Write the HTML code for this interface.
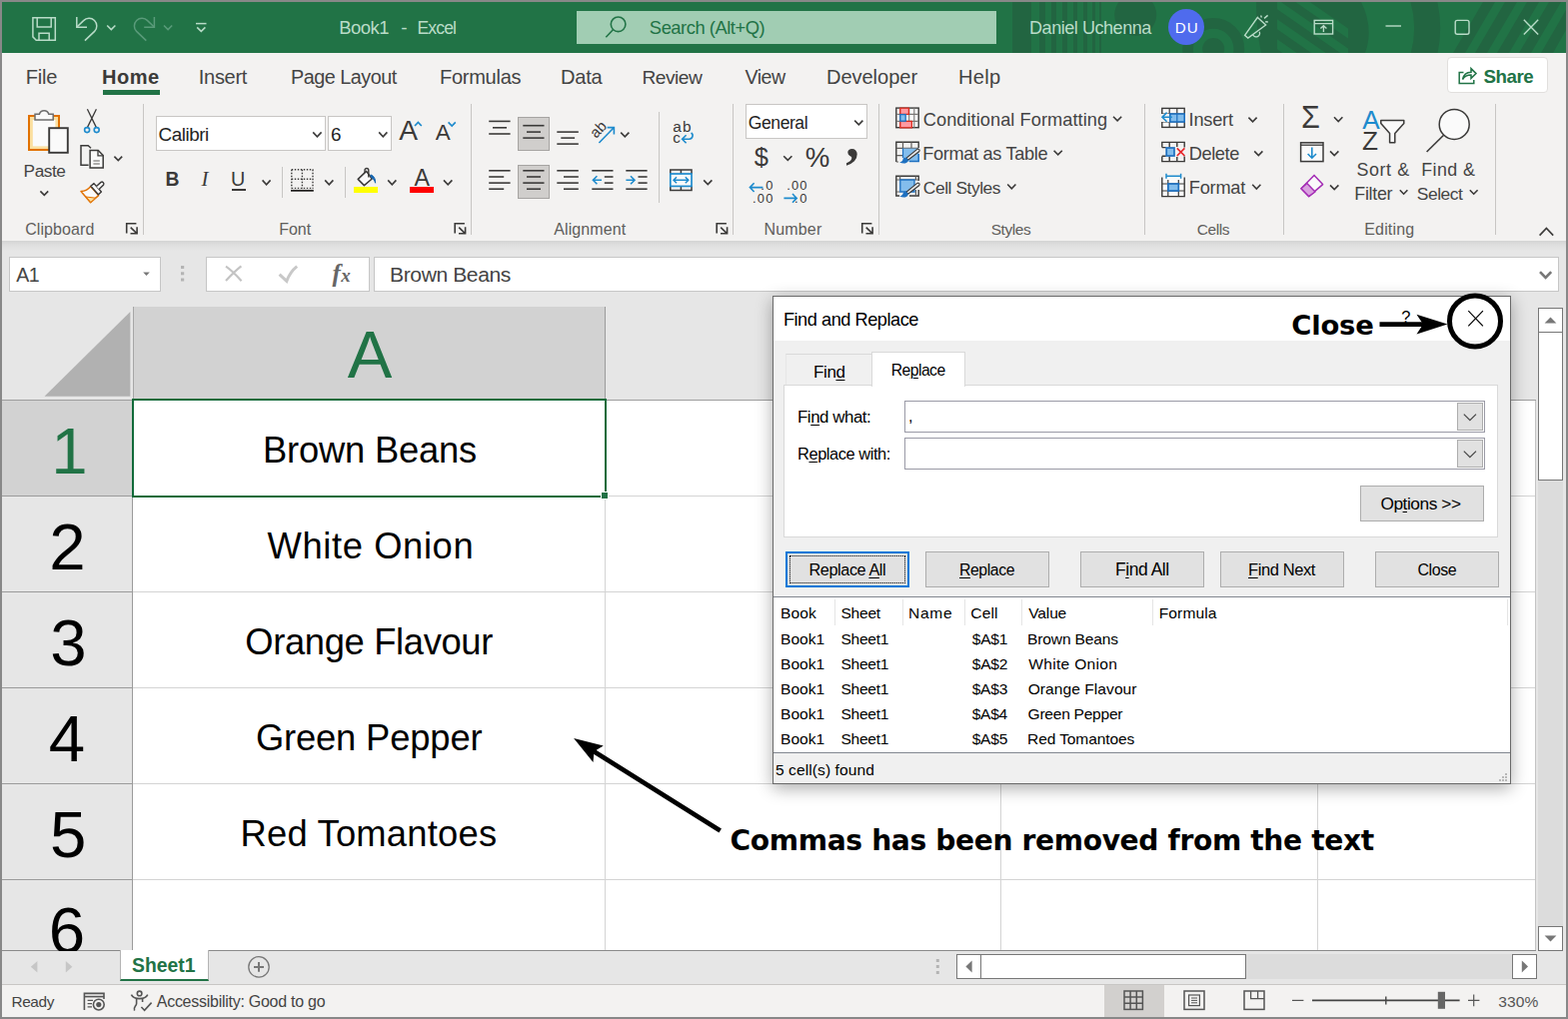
<!DOCTYPE html>
<html><head><meta charset="utf-8"><title>Book1 - Excel</title>
<style>
html,body{margin:0;padding:0}
body{width:1569px;height:1020px;background:#888;position:relative;overflow:hidden;font-family:"Liberation Sans",sans-serif}
.b{position:absolute;box-sizing:border-box}
.t{position:absolute;white-space:pre;line-height:1}
.t u{text-decoration-thickness:1px;text-underline-offset:2px}
svg{overflow:visible}
</style></head><body>
<div id="titlebar" class="b" style="left:2px;top:2px;width:1565px;height:51px;background:#217346;overflow:hidden">
<svg class="b" style="left:0;top:0" width="1565" height="51" viewBox="2 2 1565 51">
<defs><clipPath id="cpd"><path d="M1278 2H1349V53H1278Z"/></clipPath></defs>
<g fill="#226541">
<rect x="1013" y="2" width="19" height="51"/><rect x="1040" y="2" width="6" height="51"/><rect x="1052" y="2" width="5" height="51"/><rect x="1063" y="2" width="5" height="51"/><rect x="1074" y="2" width="4" height="51"/><rect x="1084" y="2" width="4" height="51"/><rect x="1093" y="2" width="3" height="51"/><rect x="1100" y="2" width="2" height="51"/>
<circle cx="1136.2" cy="14.8" r="21"/>
<circle cx="1214.2" cy="49" r="25.6" fill="none" stroke="#226541" stroke-width="10.7"/>
<circle cx="1214.2" cy="49" r="11"/>
<path d="M1257 2Q1257 30 1262 53H1366Q1375 28 1362 2Z"/>
<path d="M1421.2 -10.3A112 112 0 0 1 1421.2 66.3" fill="none" stroke="#226541" stroke-width="26"/>
<path d="M1454 53l30-51h12l-30 51z M1476 53l30-51h12l-30 51z M1498 53l30-51h12l-30 51z M1520 53l30-51h12l-30 51z M1542 53l25-43v20l-13 23z"/>
</g>
<g fill="#217346" clip-path="url(#cpd)"><path d="M1250 -10l110 76v-10l-110-76z M1250 10l110 76v-10l-110-76z M1250 -30l110 76v-10l-110-76z M1250 30l110 76v-10l-110-76z"/></g>
</svg>
</div>
<div class="b" style="left:577px;top:11px;width:420px;height:33px;background:#a1cdb3;"></div>
<span class="t" style="left:339.18px;top:19.00px;font-size:18.46px;letter-spacing:-0.462px;color:#b9dcc8;">Book1</span>
<span class="t" style="left:401.14px;top:18.00px;font-size:19.00px;letter-spacing:0.000px;color:#b9dcc8;">-</span>
<span class="t" style="left:417.45px;top:20.00px;font-size:17.53px;letter-spacing:-0.832px;color:#b9dcc8;">Excel</span>
<span class="t" style="left:649.87px;top:19.00px;font-size:18.34px;letter-spacing:-0.459px;color:#217346;">Search (Alt+Q)</span>
<span class="t" style="left:1030.01px;top:19.00px;font-size:18.02px;letter-spacing:-0.450px;color:#b9dcc8;">Daniel Uchenna</span>
<div class="b" style="left:1169px;top:9px;width:36px;height:36px;background:#4f6bed;border-radius:50%"></div>
<span class="t" style="left:1175.75px;top:20.00px;font-size:15.12px;letter-spacing:1.076px;color:#fff;">DU</span>
<div id="ribbon" class="b" style="left:2px;top:53px;width:1565px;height:188px;background:#f3f2f1"></div>
<span class="t" style="left:25.85px;top:67.00px;font-size:20.06px;letter-spacing:-0.229px;color:#444444;">File</span>
<span class="t" style="left:101.95px;top:67.00px;font-size:20.06px;letter-spacing:0.531px;color:#3b3a39;font-weight:bold;">Home</span>
<span class="t" style="left:198.74px;top:67.00px;font-size:20.06px;letter-spacing:-0.288px;color:#444444;">Insert</span>
<span class="t" style="left:291.07px;top:68.00px;font-size:19.81px;letter-spacing:-0.495px;color:#444444;">Page Layout</span>
<span class="t" style="left:439.95px;top:67.00px;font-size:20.06px;letter-spacing:-0.276px;color:#444444;">Formulas</span>
<span class="t" style="left:561.05px;top:67.00px;font-size:20.06px;letter-spacing:-0.206px;color:#444444;">Data</span>
<span class="t" style="left:642.42px;top:68.00px;font-size:19.19px;letter-spacing:-0.480px;color:#444444;">Review</span>
<span class="t" style="left:745.50px;top:68.00px;font-size:19.59px;letter-spacing:-0.490px;color:#444444;">View</span>
<span class="t" style="left:826.95px;top:67.00px;font-size:20.06px;letter-spacing:-0.032px;color:#444444;">Developer</span>
<span class="t" style="left:958.95px;top:67.00px;font-size:20.06px;letter-spacing:0.346px;color:#444444;">Help</span>
<div class="b" style="left:103px;top:90px;width:57px;height:5px;background:#217346;"></div>
<div class="b" style="left:1448px;top:57px;width:101px;height:36px;background:#fff;border:1px solid #e1dfdd;border-radius:4px"></div>
<span class="t" style="left:1484.49px;top:68.00px;font-size:18.72px;letter-spacing:-0.468px;color:#217346;font-weight:bold;">Share</span>
<div class="b" style="left:143px;top:104px;width:1px;height:131px;background:#c8c6c4;"></div>
<div class="b" style="left:471px;top:104px;width:1px;height:131px;background:#c8c6c4;"></div>
<div class="b" style="left:733px;top:104px;width:1px;height:131px;background:#c8c6c4;"></div>
<div class="b" style="left:879px;top:104px;width:1px;height:131px;background:#c8c6c4;"></div>
<div class="b" style="left:1145px;top:104px;width:1px;height:131px;background:#c8c6c4;"></div>
<div class="b" style="left:1284px;top:104px;width:1px;height:131px;background:#c8c6c4;"></div>
<div class="b" style="left:1496px;top:104px;width:1px;height:131px;background:#c8c6c4;"></div>
<div class="b" style="left:282px;top:167px;width:1px;height:31px;background:#c8c6c4;"></div>
<div class="b" style="left:345px;top:167px;width:1px;height:31px;background:#c8c6c4;"></div>
<div class="b" style="left:659px;top:112px;width:1px;height:91px;background:#c8c6c4;"></div>
<span class="t" style="left:23.58px;top:163.00px;font-size:17.25px;letter-spacing:-0.431px;color:#444;">Paste</span>
<span class="t" style="left:25.20px;top:222.00px;font-size:15.99px;letter-spacing:0.084px;color:#605e5c;">Clipboard</span>
<span class="t" style="left:279.18px;top:222.00px;font-size:15.99px;letter-spacing:-0.013px;color:#605e5c;">Font</span>
<span class="t" style="left:554.26px;top:222.00px;font-size:15.99px;letter-spacing:0.094px;color:#605e5c;">Alignment</span>
<span class="t" style="left:764.48px;top:222.00px;font-size:15.99px;letter-spacing:0.184px;color:#605e5c;">Number</span>
<span class="t" style="left:991.71px;top:222.00px;font-size:15.41px;letter-spacing:-0.385px;color:#605e5c;">Styles</span>
<span class="t" style="left:1197.73px;top:222.00px;font-size:15.46px;letter-spacing:-0.387px;color:#605e5c;">Cells</span>
<span class="t" style="left:1365.28px;top:222.00px;font-size:15.99px;letter-spacing:0.156px;color:#605e5c;">Editing</span>
<div class="b" style="left:156px;top:116px;width:170px;height:35px;background:#fff;border:1px solid #c8c6c4;"></div>
<div class="b" style="left:328px;top:116px;width:64px;height:35px;background:#fff;border:1px solid #c8c6c4;"></div>
<span class="t" style="left:158.56px;top:126.00px;font-size:18.89px;letter-spacing:-0.472px;color:#252423;">Calibri</span>
<span class="t" style="left:331.06px;top:126.00px;font-size:18.90px;letter-spacing:0.000px;color:#252423;">6</span>
<div class="b" style="left:746px;top:104px;width:122px;height:35px;background:#fff;border:1px solid #c8c6c4;"></div>
<span class="t" style="left:748.82px;top:115.00px;font-size:17.54px;letter-spacing:-0.438px;color:#252423;">General</span>
<div class="b" style="left:518px;top:117px;width:32px;height:34px;background:#d0cecc;border:1px solid #a6a4a2;"></div>
<div class="b" style="left:518px;top:165px;width:32px;height:34px;background:#d0cecc;border:1px solid #a6a4a2;"></div>
<span class="t" style="left:165.60px;top:170.00px;font-size:19.33px;letter-spacing:0.000px;color:#3b3a39;font-weight:bold;">B</span>
<span class="t" style="left:201.60px;top:169.00px;font-size:20.76px;letter-spacing:0.000px;color:#3b3a39;font-family:'Liberation Serif',serif;font-style:italic;">I</span>
<span class="t" style="left:231.07px;top:170.00px;font-size:19.77px;letter-spacing:0.000px;color:#3b3a39;">U</span>
<div class="b" style="left:232px;top:189px;width:14px;height:1.5px;background:#3b3a39;"></div>
<span class="t" style="left:399.23px;top:116.00px;font-size:28.20px;letter-spacing:0.000px;color:#3b3a39;">A</span>
<span class="t" style="left:435.74px;top:122.00px;font-size:22.38px;letter-spacing:0.000px;color:#3b3a39;">A</span>
<span class="t" style="left:414.54px;top:167.00px;font-size:23.26px;letter-spacing:0.000px;color:#3b3a39;">A</span>
<div class="b" style="left:354px;top:187.4px;width:24.399999999999977px;height:5.799999999999983px;background:#ffff00;"></div>
<div class="b" style="left:410px;top:187.4px;width:24px;height:5.799999999999983px;background:#ff0000;"></div>
<span class="t" style="left:754.75px;top:145.00px;font-size:25.44px;letter-spacing:0.000px;color:#3b3a39;">$</span>
<span class="t" style="left:805.73px;top:144.00px;font-size:27.62px;letter-spacing:0.000px;color:#3b3a39;">%</span>
<span class="t" style="left:846.23px;top:112.00px;font-size:54.00px;letter-spacing:0.000px;color:#3b3a39;font-family:'Liberation Serif',serif;font-weight:bold;">,</span>
<span class="t" style="left:923.79px;top:111.00px;font-size:18.17px;letter-spacing:0.075px;color:#444;">Conditional Formatting</span>
<span class="t" style="left:923.20px;top:145.00px;font-size:18.17px;letter-spacing:-0.324px;color:#444;">Format as Table</span>
<span class="t" style="left:923.83px;top:180.00px;font-size:17.38px;letter-spacing:-0.435px;color:#444;">Cell Styles</span>
<span class="t" style="left:1189.62px;top:111.00px;font-size:18.17px;letter-spacing:-0.201px;color:#444;">Insert</span>
<span class="t" style="left:1189.80px;top:145.00px;font-size:18.17px;letter-spacing:-0.407px;color:#444;">Delete</span>
<span class="t" style="left:1189.80px;top:179.00px;font-size:18.17px;letter-spacing:-0.203px;color:#444;">Format</span>
<span class="t" style="left:1357.50px;top:162.00px;font-size:17.88px;letter-spacing:0.594px;color:#444;">Sort &amp;</span>
<span class="t" style="left:1355.33px;top:186.00px;font-size:17.88px;letter-spacing:-0.298px;color:#444;">Filter</span>
<span class="t" style="left:1422.23px;top:162.00px;font-size:17.88px;letter-spacing:0.395px;color:#444;">Find &amp;</span>
<span class="t" style="left:1417.72px;top:186.00px;font-size:17.41px;letter-spacing:-0.435px;color:#444;">Select</span>
<span class="t" style="left:1302.00px;top:102.00px;font-size:30.52px;letter-spacing:0.000px;color:#3b3a39;">Σ</span>
<span class="t" style="left:1363.23px;top:107.00px;font-size:26.16px;letter-spacing:0.000px;color:#1e8bcd;">A</span>
<span class="t" style="left:1363.02px;top:128.00px;font-size:26.16px;letter-spacing:0.000px;color:#3b3a39;">Z</span>
<span class="t" style="left:673.14px;top:119.00px;font-size:15.45px;letter-spacing:1.327px;color:#3b3a39;">ab</span>
<span class="t" style="left:673.15px;top:130.00px;font-size:15.20px;letter-spacing:0.000px;color:#3b3a39;">c</span>
<div id="formulabar" class="b" style="left:2px;top:241px;width:1565px;height:67px;background:linear-gradient(#d4d4d4 0,#e0e0e0 5px,#e6e6e6 10px)"></div>
<div class="b" style="left:9px;top:257px;width:152px;height:35px;background:#fff;border:1px solid #c6c6c6;"></div>
<span class="t" style="left:16.35px;top:266.00px;font-size:19.52px;letter-spacing:-0.488px;color:#444;">A1</span>
<div class="b" style="left:206px;top:257px;width:164px;height:35px;background:#fff;border:1px solid #c6c6c6;"></div>
<div class="b" style="left:374px;top:257px;width:1186px;height:35px;background:#fff;border:1px solid #c6c6c6;"></div>
<span class="t" style="left:390.06px;top:264.00px;font-size:21.08px;letter-spacing:-0.407px;color:#444;">Brown Beans</span>
<span class="t" style="left:332.50px;top:261.00px;font-size:25.00px;letter-spacing:0.000px;color:#666;font-family:'Liberation Serif',serif;font-weight:bold;font-style:italic;">f</span>
<span class="t" style="left:341.24px;top:266.00px;font-size:19.00px;letter-spacing:0.000px;color:#666;font-family:'Liberation Serif',serif;font-weight:bold;font-style:italic;">x</span>
<span class="t" style="left:761.24px;top:180.00px;font-size:12.89px;letter-spacing:1.410px;color:#3b3a39;">.0</span>
<span class="t" style="left:752.94px;top:193.00px;font-size:12.89px;letter-spacing:1.261px;color:#3b3a39;">.00</span>
<span class="t" style="left:787.14px;top:180.00px;font-size:12.89px;letter-spacing:1.211px;color:#3b3a39;">.00</span>
<span class="t" style="left:795.04px;top:193.00px;font-size:12.89px;letter-spacing:1.710px;color:#3b3a39;">.0</span>
<div id="grid" class="b" style="left:2px;top:308px;width:1535px;height:643px;background:#fff"></div>
<div class="b" style="left:2px;top:307px;width:1535px;height:93px;background:#e6e6e6;"></div>
<div class="b" style="left:133px;top:307px;width:473px;height:93px;background:#d2d2d2;"></div>
<div class="b" style="left:2px;top:400px;width:131px;height:551px;background:#e6e6e6;"></div>
<div class="b" style="left:2px;top:400px;width:131px;height:96px;background:#d2d2d2;"></div>
<div class="b" style="left:133px;top:496px;width:1404px;height:1px;background:#d4d4d4;"></div>
<div class="b" style="left:2px;top:496px;width:131px;height:1px;background:#9b9b9b;"></div>
<div class="b" style="left:133px;top:592px;width:1404px;height:1px;background:#d4d4d4;"></div>
<div class="b" style="left:2px;top:592px;width:131px;height:1px;background:#9b9b9b;"></div>
<div class="b" style="left:133px;top:688px;width:1404px;height:1px;background:#d4d4d4;"></div>
<div class="b" style="left:2px;top:688px;width:131px;height:1px;background:#9b9b9b;"></div>
<div class="b" style="left:133px;top:784px;width:1404px;height:1px;background:#d4d4d4;"></div>
<div class="b" style="left:2px;top:784px;width:131px;height:1px;background:#9b9b9b;"></div>
<div class="b" style="left:133px;top:880px;width:1404px;height:1px;background:#d4d4d4;"></div>
<div class="b" style="left:2px;top:880px;width:131px;height:1px;background:#9b9b9b;"></div>
<div class="b" style="left:605px;top:400px;width:1px;height:551px;background:#d4d4d4;"></div>
<div class="b" style="left:605px;top:307px;width:1px;height:93px;background:#9b9b9b;"></div>
<div class="b" style="left:1001px;top:400px;width:1px;height:551px;background:#d4d4d4;"></div>
<div class="b" style="left:1001px;top:307px;width:1px;height:93px;background:#9b9b9b;"></div>
<div class="b" style="left:1318px;top:400px;width:1px;height:551px;background:#d4d4d4;"></div>
<div class="b" style="left:1318px;top:307px;width:1px;height:93px;background:#9b9b9b;"></div>
<div class="b" style="left:132px;top:400px;width:1px;height:551px;background:#9b9b9b;"></div>
<div class="b" style="left:1536px;top:400px;width:1px;height:551px;background:#c4c4c4;"></div>
<div class="b" style="left:2px;top:400px;width:1535px;height:1px;background:#9e9e9e;"></div>
<div class="b" style="left:133px;top:307px;width:1px;height:93px;background:#a6a6a6;"></div>
<div class="b" style="left:2px;top:951px;width:1565px;height:1px;background:#8a8a8a;"></div>
<svg class="b" style="left:0;top:0" width="1569" height="1020"><path d="M44.5 396.8H130.4V312Z" fill="#b1b1b1"/></svg>
<span class="t" style="left:347.83px;top:322.00px;font-size:66.86px;letter-spacing:0.000px;color:#217346;">A</span>
<span class="t" style="left:51.29px;top:419.00px;font-size:65.41px;letter-spacing:0.000px;color:#217346;">1</span>
<span class="t" style="left:49.33px;top:515.00px;font-size:65.41px;letter-spacing:0.000px;color:#000;">2</span>
<span class="t" style="left:50.15px;top:611.00px;font-size:65.41px;letter-spacing:0.000px;color:#000;">3</span>
<span class="t" style="left:48.73px;top:707.00px;font-size:65.41px;letter-spacing:0.000px;color:#000;">4</span>
<span class="t" style="left:49.98px;top:803.00px;font-size:65.41px;letter-spacing:0.000px;color:#000;">5</span>
<span class="t" style="left:48.73px;top:899.00px;font-size:65.41px;letter-spacing:0.000px;color:#000;">6</span>
<span class="t" style="left:263.00px;top:433.00px;font-size:36.34px;letter-spacing:-0.185px;color:#000;">Brown Beans</span>
<span class="t" style="left:267.62px;top:529.00px;font-size:36.34px;letter-spacing:0.611px;color:#000;">White Onion</span>
<span class="t" style="left:245.27px;top:625.00px;font-size:36.34px;letter-spacing:-0.337px;color:#000;">Orange Flavour</span>
<span class="t" style="left:255.88px;top:721.00px;font-size:36.34px;letter-spacing:-0.139px;color:#000;">Green Pepper</span>
<span class="t" style="left:240.50px;top:817.00px;font-size:36.34px;letter-spacing:0.230px;color:#000;">Red Tomantoes</span>
<div class="b" style="left:132px;top:399px;width:475px;height:99px;border:2px solid #116b3a;"></div>
<div class="b" style="left:601px;top:492px;width:8px;height:8px;background:#217346;border:1px solid #fff;"></div>
<div class="b" style="left:2px;top:952px;width:1565px;height:33px;background:#e6e6e6;"></div>
<div class="b" style="left:120px;top:951px;width:89px;height:31px;background:#fff;border-bottom:2px solid #217346;border-left:1px solid #b4b4b4;border-right:1px solid #b4b4b4"></div>
<span class="t" style="left:132.07px;top:957.00px;font-size:19.33px;letter-spacing:0.011px;color:#217346;font-weight:bold;">Sheet1</span>
<div class="b" style="left:2px;top:985px;width:1565px;height:33px;background:#f3f2f1;border-top:1px solid #c8c6c4"></div>
<span class="t" style="left:11.43px;top:995.00px;font-size:15.38px;letter-spacing:-0.384px;color:#444;">Ready</span>
<span class="t" style="left:156.76px;top:995.00px;font-size:15.99px;letter-spacing:-0.258px;color:#444;">Accessibility: Good to go</span>
<div class="b" style="left:1105px;top:986px;width:60px;height:32px;background:#d2d0ce;"></div>
<span class="t" style="left:1499.22px;top:995.00px;font-size:15.55px;letter-spacing:0.117px;color:#555;">330%</span>
<div class="b" style="left:957px;top:955px;width:581px;height:25px;background:#dcdcdc;"></div>
<div class="b" style="left:957px;top:955px;width:25px;height:25px;background:#fff;border:1px solid #777;"></div>
<div class="b" style="left:981px;top:955px;width:266px;height:25px;background:#fff;border:1px solid #777;"></div>
<div class="b" style="left:1513px;top:955px;width:25px;height:25px;background:#fff;border:1px solid #777;"></div>
<div class="b" style="left:1537px;top:308px;width:30px;height:644px;background:#e6e6e6;"></div>
<div class="b" style="left:1539px;top:333px;width:25px;height:594px;background:#dcdcdc;"></div>
<div class="b" style="left:1539px;top:308px;width:25px;height:25px;background:#fff;border:1px solid #777;"></div>
<div class="b" style="left:1539px;top:332px;width:25px;height:149px;background:#fff;border:1px solid #777;"></div>
<div class="b" style="left:1539px;top:927px;width:25px;height:25px;background:#fff;border:1px solid #777;"></div>
<div id="dialog" class="b" style="left:773px;top:296px;width:739px;height:489px;background:#f0f0f0;border:1px solid #6a6a6a;box-shadow:0 4px 16px rgba(0,0,0,.33)"></div>
<div class="b" style="left:774px;top:297px;width:737px;height:44px;background:#fff;"></div>
<span class="t" style="left:783.90px;top:311.00px;font-size:18.17px;letter-spacing:-0.454px;color:#000;">Find and Replace</span>
<div class="b" style="left:786px;top:354px;width:87px;height:32px;background:#f0f0f0;border-top:1px solid #d9d9d9;border-left:1px solid #e6e6e6"></div>
<div class="b" style="left:784px;top:385px;width:715px;height:153px;background:#fff;border:1px solid #d9d9d9;"></div>
<div class="b" style="left:872px;top:352px;width:94px;height:35px;background:#fff;border:1px solid #d9d9d9;border-bottom:none"></div>
<span class="t" style="left:814.10px;top:364.00px;font-size:16.99px;letter-spacing:-0.425px;color:#000;">Fin<u>d</u></span>
<span class="t" style="left:891.70px;top:363.00px;font-size:15.70px;letter-spacing:-0.518px;color:#000;">Re<u>p</u>lace</span>
<span class="t" style="left:798.01px;top:410.00px;font-size:16.82px;letter-spacing:-0.421px;color:#000;">Fi<u>n</u>d what:</span>
<span class="t" style="left:798.05px;top:446.00px;font-size:16.38px;letter-spacing:-0.410px;color:#000;">R<u>e</u>place with:</span>
<div class="b" style="left:905px;top:401px;width:581px;height:32px;background:#fff;border:1px solid #9a9aa6;"></div>
<div class="b" style="left:905px;top:438px;width:581px;height:32px;background:#fff;border:1px solid #9a9aa6;"></div>
<div class="b" style="left:1458px;top:403px;width:26px;height:28px;background:#e1e1e1;border:1px solid #adadad;"></div>
<div class="b" style="left:1458px;top:440px;width:26px;height:28px;background:#e1e1e1;border:1px solid #adadad;"></div>
<span class="t" style="left:909.06px;top:409.00px;font-size:16.00px;letter-spacing:0.000px;color:#000;">,</span>
<div class="b" style="left:1361px;top:486px;width:124px;height:36px;background:#e1e1e1;border:1px solid #adadad;"></div>
<span class="t" style="left:1381.38px;top:496.00px;font-size:17.29px;letter-spacing:-0.432px;color:#000;">Op<u>t</u>ions &gt;&gt;</span>
<div class="b" style="left:786px;top:552px;width:124px;height:36px;background:#e1e1e1;border:2px solid #0078d7;"></div>
<div class="b" style="left:790px;top:556px;width:116px;height:28px;border:1px dotted #000;"></div>
<span class="t" style="left:809.56px;top:562.00px;font-size:16.23px;letter-spacing:-0.406px;color:#000;">Replace <u>A</u>ll</span>
<div class="b" style="left:926px;top:552px;width:124px;height:36px;background:#e1e1e1;border:1px solid #adadad;"></div>
<span class="t" style="left:960.00px;top:563.00px;font-size:15.77px;letter-spacing:-0.394px;color:#000;"><u>R</u>eplace</span>
<div class="b" style="left:1081px;top:552px;width:124px;height:36px;background:#e1e1e1;border:1px solid #adadad;"></div>
<span class="t" style="left:1115.96px;top:562.00px;font-size:17.44px;letter-spacing:-0.428px;color:#000;">F<u>i</u>nd All</span>
<div class="b" style="left:1221px;top:552px;width:124px;height:36px;background:#e1e1e1;border:1px solid #adadad;"></div>
<span class="t" style="left:1249.04px;top:562.00px;font-size:16.49px;letter-spacing:-0.412px;color:#000;"><u>F</u>ind Next</span>
<div class="b" style="left:1376px;top:552px;width:124px;height:36px;background:#e1e1e1;border:1px solid #adadad;"></div>
<span class="t" style="left:1418.40px;top:563.00px;font-size:15.96px;letter-spacing:-0.399px;color:#000;">Close</span>
<div class="b" style="left:774px;top:597px;width:737px;height:157px;background:#fff;border-top:1px solid #828790;border-bottom:1px solid #828790"></div>
<div class="b" style="left:835px;top:600px;width:1px;height:26px;background:#e5e5e5;"></div>
<div class="b" style="left:903px;top:600px;width:1px;height:26px;background:#e5e5e5;"></div>
<div class="b" style="left:965px;top:600px;width:1px;height:26px;background:#e5e5e5;"></div>
<div class="b" style="left:1022px;top:600px;width:1px;height:26px;background:#e5e5e5;"></div>
<div class="b" style="left:1153px;top:600px;width:1px;height:26px;background:#e5e5e5;"></div>
<div class="b" style="left:1508px;top:600px;width:1px;height:26px;background:#e5e5e5;"></div>
<span class="t" style="left:781.02px;top:606.00px;font-size:15.55px;letter-spacing:0.108px;color:#000;">Book</span>
<span class="t" style="left:841.50px;top:606.00px;font-size:15.55px;letter-spacing:-0.253px;color:#000;">Sheet</span>
<span class="t" style="left:909.02px;top:606.00px;font-size:15.55px;letter-spacing:0.686px;color:#000;">Name</span>
<span class="t" style="left:971.22px;top:606.00px;font-size:15.55px;letter-spacing:0.180px;color:#000;">Cell</span>
<span class="t" style="left:1029.32px;top:606.00px;font-size:15.55px;letter-spacing:-0.167px;color:#000;">Value</span>
<span class="t" style="left:1159.72px;top:606.00px;font-size:15.55px;letter-spacing:0.118px;color:#000;">Formula</span>
<span class="t" style="left:781.02px;top:632.00px;font-size:15.55px;letter-spacing:0.008px;color:#000;">Book1</span>
<span class="t" style="left:841.50px;top:632.00px;font-size:15.55px;letter-spacing:-0.265px;color:#000;">Sheet1</span>
<span class="t" style="left:972.64px;top:632.00px;font-size:15.55px;letter-spacing:-0.140px;color:#000;">$A$1</span>
<span class="t" style="left:1028.12px;top:632.00px;font-size:15.55px;letter-spacing:-0.147px;color:#000;">Brown Beans</span>
<span class="t" style="left:781.02px;top:657.00px;font-size:15.55px;letter-spacing:0.008px;color:#000;">Book1</span>
<span class="t" style="left:841.50px;top:657.00px;font-size:15.55px;letter-spacing:-0.265px;color:#000;">Sheet1</span>
<span class="t" style="left:972.64px;top:657.00px;font-size:15.55px;letter-spacing:-0.140px;color:#000;">$A$2</span>
<span class="t" style="left:1029.32px;top:657.00px;font-size:15.55px;letter-spacing:0.297px;color:#000;">White Onion</span>
<span class="t" style="left:781.02px;top:682.00px;font-size:15.55px;letter-spacing:0.008px;color:#000;">Book1</span>
<span class="t" style="left:841.50px;top:682.00px;font-size:15.55px;letter-spacing:-0.265px;color:#000;">Sheet1</span>
<span class="t" style="left:972.64px;top:682.00px;font-size:15.55px;letter-spacing:-0.166px;color:#000;">$A$3</span>
<span class="t" style="left:1028.66px;top:682.00px;font-size:15.55px;letter-spacing:0.063px;color:#000;">Orange Flavour</span>
<span class="t" style="left:781.02px;top:707.00px;font-size:15.55px;letter-spacing:0.008px;color:#000;">Book1</span>
<span class="t" style="left:841.50px;top:707.00px;font-size:15.55px;letter-spacing:-0.265px;color:#000;">Sheet1</span>
<span class="t" style="left:972.64px;top:707.00px;font-size:15.55px;letter-spacing:-0.244px;color:#000;">$A$4</span>
<span class="t" style="left:1028.62px;top:707.00px;font-size:15.55px;letter-spacing:-0.254px;color:#000;">Green Pepper</span>
<span class="t" style="left:781.02px;top:732.00px;font-size:15.55px;letter-spacing:0.008px;color:#000;">Book1</span>
<span class="t" style="left:841.50px;top:732.00px;font-size:15.55px;letter-spacing:-0.265px;color:#000;">Sheet1</span>
<span class="t" style="left:972.64px;top:732.00px;font-size:15.55px;letter-spacing:-0.179px;color:#000;">$A$5</span>
<span class="t" style="left:1028.12px;top:732.00px;font-size:15.55px;letter-spacing:-0.125px;color:#000;">Red Tomantoes</span>
<span class="t" style="left:775.88px;top:763.00px;font-size:15.55px;letter-spacing:0.095px;color:#000;">5 cell(s) found</span>
<span class="t" style="left:1402.14px;top:309.00px;font-size:16.50px;letter-spacing:0.000px;color:#000;">?</span>
<span class="t" style="left:1292.33px;top:312.00px;font-size:27.43px;letter-spacing:-0.215px;color:#000;font-family:'DejaVu Sans','Liberation Sans',sans-serif;font-weight:bold;">Close</span>
<span class="t" style="left:730.59px;top:828.00px;font-size:28.12px;letter-spacing:-0.351px;color:#000;font-family:'DejaVu Sans','Liberation Sans',sans-serif;font-weight:bold;">Commas has been removed from the text</span>
<svg class="b" style="left:0;top:0" width="1569" height="1020">
<circle cx="1476" cy="321.4" r="25.5" fill="none" stroke="#000" stroke-width="5"/>
<path d="M1469.3 311.2l14.6 15.2M1483.9 311.2l-14.6 15.2" stroke="#000" stroke-width="1.2" fill="none"/>
<path d="M1380.5 324.6H1428" stroke="#000" stroke-width="4.6"/>
<path d="M1448.5 324.5L1417.5 314.8L1424 324.5L1417.5 334.4Z" fill="#000"/>
<path d="M720.7 831.5L594 752" stroke="#000" stroke-width="4.7"/>
<path d="M574.1 739.1L603.8 746.4L597.2 750.4L594.2 755L593.5 762.9Z" fill="#000"/>
</svg>
<svg class="b" style="left:0;top:0" width="1569" height="1020"><g fill="none" stroke="#b9dcc8" stroke-width="1.5">
<path d="M32.9 17.7H55.3V40.2H36.2L32.9 36.9Z"/><path d="M37.2 17.7V27H51.2V17.7"/><path d="M39 40.2V33.2H49.2V40.2"/>
<path d="M76.8 17V27.2H87"/><path d="M77.2 26.8L83.6 20.6A7.7 7.7 0 0 1 94.6 31.4L84.9 40.6"/>
<path d="M107.2 25.4L111.30000000000001 29.6L115.4 25.4" fill="none" stroke="#b9dcc8" stroke-width="1.5"/>
<path d="M196 23.6H206.5"/><path d="M197.2 27.4L201.3 31.4L205.4 27.4" fill="none" stroke="#b9dcc8" stroke-width="1.5"/>
</g>
<g fill="none" stroke="#5a9b7a" stroke-width="1.5">
<path d="M154.4 17V27.2H144.2"/><path d="M154 26.8L147.6 20.6A7.7 7.7 0 0 0 136.6 31.4L146.3 40.6"/>
<path d="M164 25.4L168.1 29.6L172.2 25.4" fill="none" stroke="#5a9b7a" stroke-width="1.5"/>
</g>
<g fill="none" stroke="#217346" stroke-width="1.6"><circle cx="618.6" cy="24.3" r="7.3"/><path d="M613.4 29.7L606.3 37.2"/></g>
<g fill="none" stroke="#b9dcc8" stroke-width="1.4">
<path d="M1258.4 17.4L1266.6 25L1248.8 38L1245.6 35.4Z"/><path d="M1253.6 34.8A3.6 3.6 0 0 0 1260.2 31.8"/><path d="M1261.6 15.4L1262.4 17.6M1265 18.4L1268.6 15.4M1266.2 21.8L1268.8 22"/>
<rect x="1315.2" y="20.4" width="18.4" height="13.6"/><path d="M1315.2 23.6H1333.6M1324.4 32V26M1321.4 28.6L1324.4 25.8L1327.4 28.6"/>
<path d="M1386.5 26H1402"/>
<rect x="1456.2" y="20.4" width="13.8" height="13.8" rx="2"/>
<path d="M1524.8 19.8L1539.2 34.4M1539.2 19.8L1524.8 34.4"/>
</g>
<g fill="none" stroke="#217346" stroke-width="1.5"><path d="M1464.5 72.5H1460.2V83.4H1474.8V80"/><path d="M1463.5 79.5C1464.5 74.5 1468 72.2 1472 72.2V68.6L1477 73.6L1472 78.4V75C1468.5 75 1465.5 76.2 1463.5 79.5Z"/></g>
<rect x="29" y="116" width="30" height="34" fill="#fbdf9f" stroke="#e17100" stroke-width="2"/>
<rect x="32.8" y="120" width="22.6" height="26.4" fill="#fafafa"/>
<path d="M35 120V114.2H39.4A4.9 4.9 0 0 1 48.8 114.2H53.2V120Z" fill="#fafafa" stroke="#6d6d6d" stroke-width="1.5"/>
<rect x="49.2" y="128.2" width="18.6" height="24.6" fill="#fafafa" stroke="#3b3a39" stroke-width="1.9"/>
<path d="M40.4 191.4L44.3 195.4L48.2 191.4" fill="none" stroke="#3b3a39" stroke-width="1.6"/>
<path d="M87.4 109.2L96.4 127.6M96.4 109.2L87.4 127.6" stroke="#3b3a39" stroke-width="1.3" fill="none"/>
<circle cx="87.1" cy="130.1" r="2.5" fill="none" stroke="#1e8bcd" stroke-width="1.6"/><circle cx="96.7" cy="130.1" r="2.5" fill="none" stroke="#1e8bcd" stroke-width="1.6"/>
<path d="M88.6 165.2H81V145.8H88.2L91 148.2" fill="none" stroke="#3b3a39" stroke-width="1.5"/>
<path d="M90.1 150.4H98.2L103.2 155.6V168H90.1Z" fill="#fafafa" stroke="#3b3a39" stroke-width="1.5"/><path d="M98 150.6V155.8H103" fill="none" stroke="#3b3a39" stroke-width="1.3"/>
<path d="M93.4 161H99.8M93.4 164H99.8" stroke="#605e5c" stroke-width="1.2"/>
<path d="M114.4 156.6L118.30000000000001 160.6L122.2 156.6" fill="none" stroke="#3b3a39" stroke-width="1.6"/>
<path d="M81 191.6C85 191.2 88.4 189.6 90.6 186.6L98.6 195.6L90.6 202.8Z" fill="#fafafa" stroke="#e17100" stroke-width="1.5" stroke-linejoin="round"/>
<path d="M86 197L95.6 198.2L90.8 202.4Z" fill="#fbdf9f" stroke="#e17100" stroke-width="1"/>
<path d="M90.8 186.2L94 183.6L101.4 192L98.4 194.8Z" fill="#fafafa" stroke="#3b3a39" stroke-width="1.4" stroke-linejoin="round"/>
<path d="M96.4 186.6L101 182.4A1.9 1.9 0 0 1 103.6 185L99 189.6" fill="#fafafa" stroke="#3b3a39" stroke-width="1.4"/>
<path d="M126.7 233.6V223.8H136.4M130.7 227.7L137.1 233.8M137.1 227.2V233.8H130.5" fill="none" stroke="#3b3a39" stroke-width="1.6"/>

<path d="M313.2 132.4L317.4 136.8L321.6 132.4" fill="none" stroke="#3b3a39" stroke-width="1.6"/><path d="M379.2 132.4L383.29999999999995 136.8L387.4 132.4" fill="none" stroke="#3b3a39" stroke-width="1.6"/>
<path d="M415 126L418.4 122.4L421.8 126" fill="none" stroke="#1e8bcd" stroke-width="1.7"/><path d="M448.6 122.4L452.2 126L455.8 122.4" fill="none" stroke="#1e8bcd" stroke-width="1.7"/>
<path d="M262.6 180.4L266.6 184.8L270.6 180.4" fill="none" stroke="#3b3a39" stroke-width="1.6"/><path d="M325.2 180.4L329.29999999999995 184.8L333.4 180.4" fill="none" stroke="#3b3a39" stroke-width="1.6"/><path d="M388.2 180.4L392.29999999999995 184.8L396.4 180.4" fill="none" stroke="#3b3a39" stroke-width="1.6"/><path d="M444 180.4L448.2 184.8L452.4 180.4" fill="none" stroke="#3b3a39" stroke-width="1.6"/>
<g fill="none" stroke="#3b3a39" stroke-width="1.4" stroke-dasharray="1.4 1.6"><path d="M291.8 169.8H313.4M291.8 179.2H313.4M291.8 188.4H313.4M291.8 169.8V188.6M302.4 169.8V188.6M313 169.8V188.6"/></g><path d="M291 190.8H313.8" stroke="#201f1e" stroke-width="1.8"/>
<path d="M366.6 171.4L372.2 179L364.4 185.6L358.2 179.4Z" fill="#fafafa" stroke="#3b3a39" stroke-width="1.5" stroke-linejoin="round"/><path d="M365 173V170.4A1.8 1.8 0 0 1 368.8 170.4V177.6" fill="none" stroke="#3b3a39" stroke-width="1.4"/><path d="M370.8 175C373.6 175.4 375.8 178.6 375.6 183.2C374.8 180.6 373.6 178.8 371.4 177.6Z" fill="#1565b0" stroke="#1565b0" stroke-width="1"/>
<path d="M489.2 121.4H510.6" stroke="#3b3a39" stroke-width="1.6" fill="none"/><path d="M493 127.8H507" stroke="#3b3a39" stroke-width="1.6" fill="none"/><path d="M489.2 134H510.6" stroke="#3b3a39" stroke-width="1.6" fill="none"/>
<path d="M523.3 125.7H544.5" stroke="#3b3a39" stroke-width="1.6" fill="none"/><path d="M527 132.1H541" stroke="#3b3a39" stroke-width="1.6" fill="none"/><path d="M523.3 138.1H544.5" stroke="#3b3a39" stroke-width="1.6" fill="none"/>
<path d="M557.3 132.1H578.8" stroke="#3b3a39" stroke-width="1.6" fill="none"/><path d="M561.3 138.1H575.1" stroke="#3b3a39" stroke-width="1.6" fill="none"/><path d="M557.3 144.1H578.8" stroke="#3b3a39" stroke-width="1.6" fill="none"/>
<path d="M489.2 170.8H510.6" stroke="#3b3a39" stroke-width="1.6" fill="none"/><path d="M489.2 177H504.2" stroke="#3b3a39" stroke-width="1.6" fill="none"/><path d="M489.2 183.1H510.6" stroke="#3b3a39" stroke-width="1.6" fill="none"/><path d="M489.2 189.2H504.2" stroke="#3b3a39" stroke-width="1.6" fill="none"/>
<path d="M523.3 170.8H544.5" stroke="#3b3a39" stroke-width="1.6" fill="none"/><path d="M527 177H541" stroke="#3b3a39" stroke-width="1.6" fill="none"/><path d="M523.3 183.1H544.5" stroke="#3b3a39" stroke-width="1.6" fill="none"/><path d="M527 189.2H541" stroke="#3b3a39" stroke-width="1.6" fill="none"/>
<path d="M557.3 170.8H578.8" stroke="#3b3a39" stroke-width="1.6" fill="none"/><path d="M564 177H578.8" stroke="#3b3a39" stroke-width="1.6" fill="none"/><path d="M557.3 183.1H578.8" stroke="#3b3a39" stroke-width="1.6" fill="none"/><path d="M564 189.2H578.8" stroke="#3b3a39" stroke-width="1.6" fill="none"/>
<path d="M592.3 170.8H613.5" stroke="#3b3a39" stroke-width="1.6" fill="none"/><path d="M604.8 177H613.5" stroke="#3b3a39" stroke-width="1.6" fill="none"/><path d="M604.8 183.1H613.5" stroke="#3b3a39" stroke-width="1.6" fill="none"/><path d="M592.3 189.2H613.5" stroke="#3b3a39" stroke-width="1.6" fill="none"/>
<path d="M626.3 170.8H647.6" stroke="#3b3a39" stroke-width="1.6" fill="none"/><path d="M638.5 177H647.6" stroke="#3b3a39" stroke-width="1.6" fill="none"/><path d="M638.5 183.1H647.6" stroke="#3b3a39" stroke-width="1.6" fill="none"/><path d="M626.3 189.2H647.6" stroke="#3b3a39" stroke-width="1.6" fill="none"/>
<g fill="none" stroke="#1e8bcd" stroke-width="1.6"><path d="M593.4 180.2H602M597.4 176.2L593.4 180.2L597.4 184.2"/><path d="M626.4 180.2H635M631 176.2L635 180.2L631 184.2"/><path d="M599.4 143L614.2 127.8M607.6 127.6H614.4V134.6"/><path d="M683 139.2H689.6A3.4 3.4 0 0 0 691.6 133M686.6 135.2L682.6 139.2L686.6 143.2"/></g>
<text transform="translate(596.5 139) rotate(-47)" font-family="Liberation Sans,sans-serif" font-size="15" fill="#3b3a39">ab</text>
<path d="M621.2 132.6L625.3 136.8L629.4 132.6" fill="none" stroke="#3b3a39" stroke-width="1.6"/><path d="M704.2 180.4L708.3 184.6L712.4 180.4" fill="none" stroke="#3b3a39" stroke-width="1.6"/>
<g fill="none" stroke="#3b3a39" stroke-width="1.5"><path d="M670.8 174V170H692V174M670.8 186.4V190.6H692V186.4M681.4 170V174M681.4 186.4V190.6"/></g><rect x="670.8" y="174" width="21.2" height="12.4" fill="#fafafa" stroke="#1e8bcd" stroke-width="1.7"/><path d="M674 180.2H688.8M677 177.2L674 180.2L677 183.2M685.8 177.2L688.8 180.2L685.8 183.2" fill="none" stroke="#1e8bcd" stroke-width="1.5"/>
<path d="M455.2 233.6V223.8H464.9M459.2 227.7L465.6 233.8M465.6 227.2V233.8H459.0" fill="none" stroke="#3b3a39" stroke-width="1.6"/><path d="M717.2 233.6V223.8H726.9M721.2 227.7L727.6 233.8M727.6 227.2V233.8H721.0" fill="none" stroke="#3b3a39" stroke-width="1.6"/><path d="M862.7 233.6V223.8H872.4M866.7 227.7L873.1 233.8M873.1 227.2V233.8H866.5" fill="none" stroke="#3b3a39" stroke-width="1.6"/>
<path d="M855.2 120.6L859.3 124.8L863.4 120.6" fill="none" stroke="#3b3a39" stroke-width="1.6"/><path d="M784.2 156.2L788.3 160.4L792.4 156.2" fill="none" stroke="#3b3a39" stroke-width="1.6"/>
<g fill="none" stroke="#1e8bcd" stroke-width="1.6"><path d="M750.4 187.6H763.4M754.6 183.2L750.4 187.6L754.6 192"/><path d="M784.4 198.4H797.2M793 194L797.2 198.4L793 202.8"/></g>
<g><rect x="896.8" y="108.1" width="22.4" height="19.6" fill="#fafafa" stroke="#3b3a39" stroke-width="1.4"/><path d="M900.6 108V128M909.7 108V128M914.8 108V128M896.8 114.4H919.2M896.8 121.4H919.2" stroke="#797775" stroke-width="1.1" fill="none"/><rect x="900.8" y="108.2" width="8.6" height="6.2" fill="#ff9aa2" stroke="#d92c20" stroke-width="1.3"/><rect x="900.8" y="121.4" width="11.6" height="6.4" fill="#ff9aa2" stroke="#d92c20" stroke-width="1.3"/><rect x="900.8" y="114.6" width="5.4" height="6.6" fill="#83bdec" stroke="#1e70c0" stroke-width="1.3"/></g>
<g><path d="M919.2 148V142.2H896.8V162" fill="none" stroke="#3b3a39" stroke-width="1.4"/><path d="M903.5 142.2V148.4M912 142.2V148.4M896.8 148.4H919M896.8 155.6H903.5M896.8 162H899" stroke="#605e5c" stroke-width="1.2" fill="none"/><path d="M903.6 148.6H919.2V161.8H903.6Z" fill="#83bdec"/><path d="M910 161.6H919.2V154" fill="none" stroke="#1e70c0" stroke-width="1.5"/><path d="M903.5 148.4V158" stroke="#1e70c0" stroke-width="1.2"/><g transform="translate(0 0)"><path d="M919.6 149.4C920.4 150 920.2 151 919.6 151.8L908.6 160.2L906.8 158.4L917.4 149.6C918.2 149 919 149 919.6 149.4Z" fill="#e6e6e6" stroke="#3b3a39" stroke-width="1.1"/><path d="M906.4 158C908.4 158.6 909.2 160.2 908.4 161.8C907 164 903.4 164 900 162.4C902.6 162 903.2 160.6 903.6 159.4C904.2 158 905.2 157.6 906.4 158Z" fill="#1e70c0"/></g></g>
<g><path d="M919.2 181V176.2H896.8V196H900M910 196H919.2V190" fill="none" stroke="#3b3a39" stroke-width="1.4"/><path d="M900.6 176.2V180M916.4 176.2V180M896.8 180H919M896.8 192H900.6M916.4 190V196" stroke="#605e5c" stroke-width="1.2" fill="none"/><path d="M900.8 180H915V192H900.8Z" fill="#83bdec" stroke="#1e70c0" stroke-width="1.3"/><g transform="translate(0 34)"><path d="M919.6 149.4C920.4 150 920.2 151 919.6 151.8L908.6 160.2L906.8 158.4L917.4 149.6C918.2 149 919 149 919.6 149.4Z" fill="#e6e6e6" stroke="#3b3a39" stroke-width="1.1"/><path d="M906.4 158C908.4 158.6 909.2 160.2 908.4 161.8C907 164 903.4 164 900 162.4C902.6 162 903.2 160.6 903.6 159.4C904.2 158 905.2 157.6 906.4 158Z" fill="#1e70c0"/></g></g>
<path d="M1114 116.7L1118.1 120.9L1122.2 116.7" fill="none" stroke="#3b3a39" stroke-width="1.6"/><path d="M1054.6 150.7L1058.6999999999998 154.9L1062.8 150.7" fill="none" stroke="#3b3a39" stroke-width="1.6"/><path d="M1008.2 184.5L1012.3 188.8L1016.4 184.5" fill="none" stroke="#3b3a39" stroke-width="1.6"/>
<g><rect x="1162.8" y="108.4" width="22.4" height="19" fill="#fafafa" stroke="#3b3a39" stroke-width="1.4"/><path d="M1170.2 108.4V127.4M1177.8 108.4V127.4M1162.8 114H1185M1162.8 122H1185" stroke="#3b3a39" stroke-width="1.2" fill="none"/><rect x="1170.8" y="114" width="14.4" height="8" fill="#83bdec" stroke="#1e70c0" stroke-width="1.6"/><path d="M1177.8 114V122" stroke="#1e70c0" stroke-width="1.2"/><path d="M1162 114H1170V122H1162Z" fill="#f3f2f1"/><path d="M1163 117.2H1172.8M1167.6 112.6L1163 117.2L1167.6 121.8" fill="none" stroke="#1e8bcd" stroke-width="1.6"/></g>
<g fill="none" stroke="#3b3a39" stroke-width="1.4"><path d="M1162.8 147.6V142.4H1185.2V147.6M1162.8 156.4V161.6H1185.2V156.4M1170.2 142.4V147.6M1177.8 142.4V147M1170.2 156.4V161.6M1177.8 157V161.6M1162.8 147.6H1166.8M1162.8 156.2H1166.8"/></g><rect x="1167.2" y="148" width="7.8" height="8" fill="#83bdec" stroke="#1e70c0" stroke-width="1.7"/><path d="M1177.8 148.4L1185.4 156M1185.4 148.4L1177.8 156" stroke="#e8262a" stroke-width="1.7" fill="none"/>
<g><path d="M1162.8 177.4V196.6H1185.2V177.4" fill="#fafafa" stroke="#3b3a39" stroke-width="1.4"/><path d="M1168.8 180V196.6M1179.3 180V196.6M1162.8 184H1185M1162.8 191H1185" stroke="#3b3a39" stroke-width="1.2" fill="none"/><rect x="1168.9" y="184" width="10.4" height="7" fill="#83bdec" stroke="#1e70c0" stroke-width="1.7"/><path d="M1167 176.2H1181.6M1167 173.8V178.8M1181.6 173.8V178.8" stroke="#1e8bcd" stroke-width="1.5" fill="none"/></g>
<path d="M1249.4 117.6L1253.5 121.8L1257.6 117.6" fill="none" stroke="#3b3a39" stroke-width="1.6"/><path d="M1255.2 151.4L1259.3000000000002 155.6L1263.4 151.4" fill="none" stroke="#3b3a39" stroke-width="1.6"/><path d="M1253.2 184.8L1257.3000000000002 189L1261.4 184.8" fill="none" stroke="#3b3a39" stroke-width="1.6"/>
<path d="M1335 117.2L1339.2 121.6L1343.4 117.2" fill="none" stroke="#3b3a39" stroke-width="1.6"/><path d="M1331 151.4L1335.2 155.6L1339.4 151.4" fill="none" stroke="#3b3a39" stroke-width="1.6"/><path d="M1331 185.4L1335.2 189.6L1339.4 185.4" fill="none" stroke="#3b3a39" stroke-width="1.6"/><path d="M1400.8 190.2L1404.6 194.2L1408.4 190.2" fill="none" stroke="#3b3a39" stroke-width="1.6"/><path d="M1470.8 190.2L1474.6999999999998 194.2L1478.6 190.2" fill="none" stroke="#3b3a39" stroke-width="1.6"/>
<rect x="1301.6" y="142.8" width="22.4" height="18.8" fill="#fafafa" stroke="#3b3a39" stroke-width="1.5"/><path d="M1301.6 145.2H1324" stroke="#3b3a39" stroke-width="1.3"/><path d="M1312.8 147.6V158M1308.6 154L1312.8 158.2L1317 154" fill="none" stroke="#1e8bcd" stroke-width="1.6"/>
<path d="M1315 175.4L1323.6 184.6L1309.6 196.6L1302 188.8Z" fill="#fafafa" stroke="#a32cb4" stroke-width="1.5" stroke-linejoin="round"/><path d="M1307.8 183.6L1316 192L1309.6 196.6L1302 188.8Z" fill="#d9a0df" stroke="#a32cb4" stroke-width="1.4" stroke-linejoin="round"/>
<path d="M1381.8 120.4H1404.8V123.6L1395.8 133.6V142.8H1390.6V133.6L1381.8 123.6Z" fill="#fafafa" stroke="#3b3a39" stroke-width="1.5" stroke-linejoin="round"/>
<circle cx="1455.2" cy="124.4" r="15" fill="#fafafa" stroke="#3b3a39" stroke-width="1.5"/><path d="M1444.6 135.2L1427.6 152" stroke="#3b3a39" stroke-width="1.6"/>
<path d="M1540.6 235.6L1547.4 228.4L1554.2 235.6" fill="none" stroke="#3b3a39" stroke-width="1.6"/>
<path d="M143.2 272.4H149.8L146.5 276Z" fill="#777"/>
<path d="M181 266h3.2v3h-3.2zM181 272.2h3.2v3h-3.2zM181 278.4h3.2v3h-3.2z" fill="#b4b4b4"/>
<path d="M226 266.6C231 270 237 276 241.6 281.2M241.4 266.4C236 270.6 231 275.6 226 281" fill="none" stroke="#c3c3c3" stroke-width="2.1"/>
<path d="M279.6 274.6L286.8 281.4C289 275.6 292.6 270.2 297.2 266.6" fill="none" stroke="#c8c8c8" stroke-width="3"/>
<path d="M1541 272.2L1546.6 278L1552.2 272.2" fill="none" stroke="#777" stroke-width="2.6"/>
<path d="M1545.6 323.6H1557.4L1551.5 317.6Z" fill="#777"/><path d="M1545.6 936.6H1557.4L1551.5 942.6Z" fill="#777"/>
<path d="M972.6 961.4V973.4L966.4 967.4Z" fill="#777"/><path d="M1522.8 961.4V973.4L1529 967.4Z" fill="#777"/>
<path d="M936.8 960h3v3h-3zM936.8 966h3v3h-3zM936.8 972h3v3h-3z" fill="#b4b4b4"/>
<path d="M37.4 962V973.4L30.8 967.7Z" fill="#c6c6c6"/><path d="M65.8 962V973.4L72.4 967.7Z" fill="#c6c6c6"/>
<circle cx="259" cy="967.9" r="10.2" fill="none" stroke="#777" stroke-width="1.3"/><path d="M254 967.9H264M259 963V972.8" stroke="#777" stroke-width="2"/>
<g fill="none" stroke="#555" stroke-width="1.6"><path d="M84.4 1011V994.4H104V1000"/><path d="M84.4 997.6H104"/><path d="M87.6 1001.4H93M87.6 1004.6H92M87.6 1007.8H92" stroke-width="1.3"/><circle cx="98.8" cy="1005.6" r="5.4"/></g><circle cx="98.8" cy="1005.6" r="2.6" fill="#555"/>
<g fill="none" stroke="#555" stroke-width="1.6"><circle cx="139.6" cy="994.4" r="2.3"/><path d="M131.4 995.6C132.6 998 136 999.6 139.6 999.6C143.2 999.6 146.6 998 147.8 995.6"/><path d="M136.6 999.6V1004.4C136.6 1007 133 1008 134.6 1011.6M142.6 999.6V1003"/><path d="M141.4 1008L144.6 1011.4L151.6 1003.6"/></g>
<g fill="none" stroke="#555" stroke-width="1.5"><rect x="1125" y="992" width="18.4" height="18.4"/><path d="M1131.1 992V1010.4M1137.3 992V1010.4M1125 998.1H1143.4M1125 1004.3H1143.4"/><rect x="1185" y="992" width="20" height="18.4"/><rect x="1189.6" y="996" width="10.8" height="10.6" stroke-width="1.2"/><path d="M1192 999H1198M1192 1001.4H1198M1192 1003.8H1198" stroke-width="1"/><rect x="1245" y="992" width="20" height="18.4"/><path d="M1251.6 992V999.6H1258.6V992M1258.6 999.6H1265" stroke-width="1.3"/></g>
<path d="M1293 1001.4H1304.4" stroke="#555" stroke-width="1.2"/><path d="M1313 1001.4H1460.6" stroke="#444" stroke-width="1.6"/><path d="M1386.8 997.6V1005.4" stroke="#444" stroke-width="1.4"/><rect x="1438.8" y="992.8" width="7.2" height="17" fill="#666"/><path d="M1469 1001.4H1480.4M1474.7 995.6V1007.2" stroke="#555" stroke-width="1.2"/>
<path d="M1464.8 414.6L1470.9 420.6L1477 414.6M1464.8 451.6L1470.9 457.6L1477 451.6" fill="none" stroke="#444" stroke-width="1.2"/>
<path d="M1506 774h2v2h-2zM1503 777h2v2h-2zM1506 777h2v2h-2zM1500 780h2v2h-2zM1503 780h2v2h-2zM1506 780h2v2h-2z" fill="#b8b8b8"/></svg>
</body></html>
